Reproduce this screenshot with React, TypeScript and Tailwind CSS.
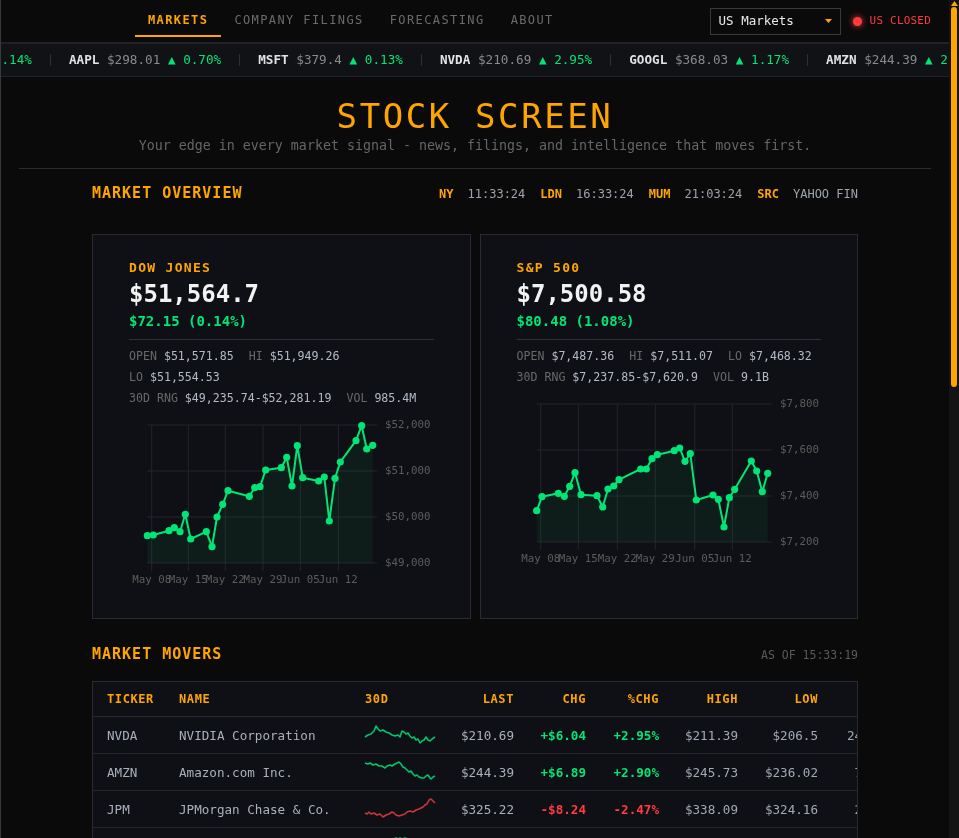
import React from "react";

type Pt = [number, number];

const navItems = ["MARKETS", "COMPANY FILINGS", "FORECASTING", "ABOUT"];

const tickers = [
  { sym: "DOW", price: "$51,564.7", pct: "0.14%", up: true },
  { sym: "AAPL", price: "$298.01", pct: "0.70%", up: true },
  { sym: "MSFT", price: "$379.4", pct: "0.13%", up: true },
  { sym: "NVDA", price: "$210.69", pct: "2.95%", up: true },
  { sym: "GOOGL", price: "$368.03", pct: "1.17%", up: true },
  { sym: "AMZN", price: "$244.39", pct: "2.90%", up: true },
  { sym: "JPM", price: "$325.22", pct: "2.47%", up: false },
];

const clocks: [string, string][] = [
  ["NY", "11:33:24"],
  ["LDN", "16:33:24"],
  ["MUM", "21:03:24"],
  ["SRC", "YAHOO FIN"],
];

const xLabels = ["May 08", "May 15", "May 22", "May 29", "Jun 05", "Jun 12"];

// chart points in svg-local px (plot top = 13, bottom = 151)
const dowPts: Pt[] = [
  [18.3, 123.7], [24.3, 123], [40, 118.7], [45.3, 115.7], [51, 119.7], [56.3, 102.3],
  [61.7, 127], [77.3, 119.7], [83, 134.7], [88, 105], [93.7, 92.3], [99, 78.7],
  [120.3, 84.3], [125.7, 75.7], [131, 74.7], [136.7, 58], [152.3, 55.7], [157.7, 45.3],
  [163, 74], [168.3, 33.7], [173.7, 65.7], [189.7, 69], [195.3, 65], [200.3, 109],
  [206, 66.3], [211.3, 50], [227, 28.7], [232.7, 13.7], [237.7, 37], [243.7, 33.3],
];

const spxPts: Pt[] = [
  [19.7, 119.7], [25, 105.7], [41.3, 102.3], [47.3, 105.3], [52.7, 95.3], [58, 81.7],
  [64, 103.7], [80, 104.7], [85.7, 116], [91, 98], [96.7, 95], [102, 88.7],
  [123.7, 78], [129.3, 78], [135, 67.7], [140.3, 63.7], [157.3, 59.7], [162.7, 57],
  [168, 70.3], [173.3, 62.7], [179.3, 109], [196, 104], [201.3, 108.3], [207, 136],
  [212.3, 106.7], [217.7, 98.3], [234.3, 70], [239.7, 80], [245.3, 100.7], [250.7, 82.3],
];

const movers = [
  { t: "NVDA", name: "NVIDIA Corporation", last: "$210.69", chg: "+$6.04", pct: "+2.95%", high: "$211.39", low: "$206.5", vol: "241.36M", cap: "$5.13T", up: true,
    spark: "0,12 3,10 6,9 9,6 11,1 13,4 15,6 18,5 21,7 24,8 27,10 30,11 33,10 35,12 37,6 39,7 41,9 43,8 45,11 47,13 49,12 51,15 53,14 55,18 57,16 59,15 61,12 63,15 65,16 67,14 70,12" },
  { t: "AMZN", name: "Amazon.com Inc.", last: "$244.39", chg: "+$6.89", pct: "+2.90%", high: "$245.73", low: "$236.02", vol: "73.58M", cap: "$2.61T", up: true,
    spark: "0,1 3,2 5,1 8,3 11,2 14,4 17,4 20,6 22,4 25,3 27,4 30,2 32,1 34,0 36,2 38,5 40,6 42,8 44,10 46,9 48,12 50,14 52,13 54,15 57,16 59,16 61,14 63,13 65,16 66,17 68,15 70,14" },
  { t: "JPM", name: "JPMorgan Chase & Co.", last: "$325.22", chg: "-$8.24", pct: "-2.47%", high: "$338.09", low: "$324.16", vol: "22.47M", cap: "$894.1B", up: false,
    spark: "0,14 2,15 4,13 6,15 9,14 12,16 15,15 18,18 21,16 24,15 27,13 29,14 31,16 34,17 37,16 40,15 42,13 45,12 48,13 51,11 54,10 56,9 58,8 60,6 62,5 64,1 66,0 68,2 70,4" },
  { t: "TSLA", name: "Tesla, Inc.", last: "$438.12", chg: "+$9.87", pct: "+2.30%", high: "$441.80", low: "$426.33", vol: "96.12M", cap: "$1.41T", up: true,
    spark: "0,12 3,11 6,13 9,10 12,11 15,8 18,9 21,6 24,7 27,4 29,3 31,2 33,3 35,2 37,3 40,2 43,3 45,3 47,4 50,5 53,4 56,7 59,6 62,9 65,8 68,7 70,8" },
  { t: "META", name: "Meta Platforms, Inc.", last: "$712.48", chg: "+$11.02", pct: "+1.57%", high: "$715.90", low: "$698.14", vol: "14.83M", cap: "$1.79T", up: true,
    spark: "0,16 4,15 8,14 12,15 16,12 20,13 24,10 28,11 32,9 36,10 40,7 44,8 48,6 52,7 56,4 60,5 64,3 70,2" },
  { t: "XOM", name: "Exxon Mobil Corporation", last: "$118.36", chg: "-$2.11", pct: "-1.75%", high: "$120.84", low: "$117.92", vol: "18.09M", cap: "$502.7B", up: false,
    spark: "0,4 4,5 8,3 12,6 16,5 20,8 24,7 28,9 32,8 36,11 40,10 44,12 48,11 52,14 56,13 60,16 64,15 70,17" },
  { t: "AAPL", name: "Apple Inc.", last: "$298.01", chg: "+$2.07", pct: "+0.70%", high: "$299.44", low: "$294.85", vol: "51.27M", cap: "$4.42T", up: true,
    spark: "0,13 4,12 8,14 12,11 16,12 20,9 24,10 28,8 32,11 36,9 40,7 44,8 48,6 52,8 56,5 60,6 64,4 70,5" },
  { t: "GOOGL", name: "Alphabet Inc.", last: "$368.03", chg: "+$4.26", pct: "+1.17%", high: "$369.51", low: "$362.40", vol: "28.65M", cap: "$4.46T", up: true,
    spark: "0,15 4,14 8,15 12,12 16,13 20,10 24,11 28,9 32,10 36,7 40,8 44,6 48,7 52,4 56,5 60,3 64,4 70,2" },
  { t: "JNJ", name: "Johnson & Johnson", last: "$162.74", chg: "-$1.48", pct: "-0.90%", high: "$164.55", low: "$162.10", vol: "7.92M", cap: "$391.8B", up: false,
    spark: "0,6 4,5 8,7 12,6 16,8 20,7 24,9 28,8 32,10 36,12 40,11 44,13 48,12 52,14 56,13 60,15 64,14 70,16" },
  { t: "MSFT", name: "Microsoft Corporation", last: "$379.4", chg: "+$0.49", pct: "+0.13%", high: "$381.02", low: "$376.88", vol: "19.44M", cap: "$2.82T", up: true,
    spark: "0,10 4,11 8,9 12,10 16,8 20,11 24,9 28,10 32,8 36,9 40,7 44,10 48,8 52,9 56,7 60,8 64,9 70,8" },
];

const news = [
  { src: "REUTERS", time: "15:21", title: "Chipmakers extend rally as AI spending forecasts climb again" },
  { src: "BLOOMBERG", time: "15:02", title: "Treasury yields slip ahead of Fed minutes; dollar steady" },
  { src: "SEC 8-K", time: "14:47", title: "JPMorgan Chase files update on consumer credit reserves" },
  { src: "WSJ", time: "14:30", title: "Amazon expands same-day delivery network to 40 new metros" },
  { src: "CNBC", time: "14:12", title: "Oil retreats as inventories build for third straight week" },
  { src: "SEC 10-Q", time: "13:55", title: "Tesla quarterly filing shows higher energy storage margins" },
  { src: "FT", time: "13:40", title: "European stocks close mixed; FTSE 100 edges higher" },
  { src: "REUTERS", time: "13:18", title: "Nikkei futures point higher after yen weakens overnight" },
];

function IndexChart({ pts, right, xTicks, yLabels }: { pts: Pt[]; right: number; xTicks: number[]; yLabels: string[] }) {
  const yGrid = [13, 59, 105, 151];
  const left = pts[0][0];
  const line = pts.map((p) => p.join(",")).join(" ");
  const area =
    `M${left},151 ` + pts.map(([x, y]) => `L${x},${y}`).join(" ") + ` L${pts[pts.length - 1][0]},151 Z`;
  return (
    <svg width="304" height="180" viewBox="0 0 304 180" className="mt-[3px] block overflow-visible">
      {yGrid.map((y) => (
        <line key={y} x1={left} x2={right + 5} y1={y} y2={y} stroke="#22252b" />
      ))}
      {xTicks.map((x) => (
        <line key={x} x1={x} x2={x} y1={13} y2={159} stroke="#22252b" />
      ))}
      <path d={area} fill="#00e676" fillOpacity={0.06} />
      <polyline points={line} fill="none" stroke="#00e676" strokeWidth={2} strokeLinejoin="round" />
      {pts.map(([x, y], i) => (
        <circle key={i} cx={x} cy={y} r={3.6} fill="#00e676" />
      ))}
      {yLabels.map((l, i) => (
        <text key={l} x={right + 13} y={yGrid[i]} dominantBaseline="middle" fontSize="10.8" fill="#5c5c5c">
          {l}
        </text>
      ))}
      {xTicks.map((x, i) => (
        <text key={x} x={x} y={168} textAnchor="middle" dominantBaseline="middle" fontSize="10.8" fill="#5c5c5c">
          {xLabels[i]}
        </text>
      ))}
    </svg>
  );
}

function IndexCard(props: {
  name: string;
  price: string;
  change: string;
  stats: [string, string][];
  pts: Pt[];
  right: number;
  xTicks: number[];
  yLabels: string[];
}) {
  return (
    <div className="border border-[#2a2b31] bg-[#0f1015] px-[36px] pb-[26px] pt-[23px]">
      <div className="text-[13px] font-bold leading-[20px] tracking-[1.3px] text-[#ffa500]">{props.name}</div>
      <div className="mt-[2px] text-[24px] font-bold leading-[28px] text-[#f2f2f2]">{props.price}</div>
      <div className="mt-[3px] text-[14px] font-bold leading-[20px] text-[#00e676]">{props.change}</div>
      <div className="mt-[8px] h-px bg-[#303136]" />
      <div className="mt-[6px] flex flex-wrap gap-x-[15px] text-[11.6px] leading-[21px]">
        {props.stats.map(([k, v]) => (
          <span key={k} className="whitespace-nowrap">
            <span className="text-[#686868]">{k}</span> <span className="text-[#b3bac6]">{v}</span>
          </span>
        ))}
      </div>
      <IndexChart pts={props.pts} right={props.right} xTicks={props.xTicks} yLabels={props.yLabels} />
    </div>
  );
}

function SectionTitle({ children }: { children: React.ReactNode }) {
  return <h2 className="text-[15px] font-bold leading-[20px] tracking-[1px] text-[#ffa500]">{children}</h2>;
}

// thin orange scroll rail drawn next to the scrolling page
function ScrollRail() {
  return (
    <div className="flex w-[10px] shrink-0 flex-col items-center bg-[#141414]">
      <svg width="7" height="5" viewBox="0 0 7 5" className="mt-px">
        <path d="M0 5L3.5 0 7 5z" fill="#ffa500" />
      </svg>
      <div className="mt-px h-[380px] w-[6px] rounded-full bg-[#ffa500]" />
    </div>
  );
}

export default function App() {
  return (
    <div className="flex h-screen border-l border-[#3a3a3a] bg-[#0a0a0a] font-['DejaVu_Sans_Mono',monospace] text-[#b3bac6]">
      <div className="min-w-0 flex-1 overflow-y-auto [scrollbar-width:none]">
        {/* top nav */}
        <header className="flex h-[44px] items-center border-b-2 border-[#202228] pr-[18px]">
          <nav className="ml-[134px] flex self-start">
            {navItems.map((item, i) => (
              <a
                key={item}
                href="#"
                className={
                  i === 0
                    ? "flex h-[37px] items-center border-b-2 border-[#ffa500] px-[13px] pt-[5px] text-[12px] font-bold tracking-[1.4px] text-[#ffa500]"
                    : "flex h-[37px] items-center border-b-2 border-transparent px-[13px] pt-[5px] text-[12px] tracking-[1.4px] text-[#6b6b6b]"
                }
              >
                {item}
              </a>
            ))}
          </nav>
          <div className="ml-auto flex items-center">
            <button className="flex h-[27px] w-[131px] items-center justify-between border border-[#3a3a3a] bg-[#0a0a0a] px-[8px] text-[12.5px] text-[#e8e8e8]">
              US Markets
              <svg width="7" height="4" viewBox="0 0 7 4">
                <path d="M0 0h7L3.5 4z" fill="#ffa500" />
              </svg>
            </button>
            <div className="ml-[12px] flex items-center gap-[8px]">
              <span className="h-[9px] w-[9px] rounded-full bg-[#ff3b3b] shadow-[0_0_6px_#ff3b3b]" />
              <span className="text-[11px] tracking-[0.2px] text-[#ff3b3b]">US CLOSED</span>
            </div>
          </div>
        </header>

        {/* ticker tape */}
        <div className="flex h-[33px] items-center overflow-hidden whitespace-nowrap border-b border-[#202228] bg-[#111216] text-[12.65px]">
          <div className="-ml-[129px] flex shrink-0 items-center">
            {tickers.map((t, i) => (
              <React.Fragment key={t.sym}>
                {i > 0 && <span className="mx-[18px] h-[12px] w-px bg-[#2e2f35]" />}
                <span>
                  <span className="font-bold text-[#e2e2e2]">{t.sym}</span>{" "}
                  <span className="text-[#8a8a8a]">{t.price}</span>{" "}
                  <span className={t.up ? "text-[#00e676]" : "text-[#ff3b3b]"}>
                    {t.up ? "▲" : "▼"} {t.pct}
                  </span>
                </span>
              </React.Fragment>
            ))}
          </div>
        </div>

        <main className="px-[18px] pb-[60px] pt-[22px]">
          <h1 className="text-center text-[34px] leading-none tracking-[2.6px] text-[#ffa500]">STOCK SCREEN</h1>
          <p className="mt-[3px] text-center text-[13.3px] leading-[20px] text-[#666]">
            Your edge in every market signal - news, filings, and intelligence that moves first.
          </p>
          <div className="mt-[12px] h-px bg-[#2c2c30]" />

          {/* market overview */}
          <div className="mx-auto mt-[14px] flex max-w-[766px] items-baseline justify-between">
            <SectionTitle>MARKET OVERVIEW</SectionTitle>
            <div className="flex gap-[15px] text-[12px]">
              {clocks.map(([k, v]) => (
                <span key={k} className="whitespace-nowrap">
                  <span className="font-bold text-[#ffa500]">{k}</span>
                  <span className="ml-[14px] text-[#9da3ad]">{v}</span>
                </span>
              ))}
            </div>
          </div>

          <div className="mx-auto mt-[31px] grid max-w-[766px] grid-cols-2 gap-[9px]">
            <IndexCard
              name="DOW JONES"
              price="$51,564.7"
              change="$72.15 (0.14%)"
              stats={[
                ["OPEN", "$51,571.85"],
                ["HI", "$51,949.26"],
                ["LO", "$51,554.53"],
                ["30D RNG", "$49,235.74-$52,281.19"],
                ["VOL", "985.4M"],
              ]}
              pts={dowPts}
              right={243}
              xTicks={[22.7, 59.3, 96.3, 134, 171.3, 209.3]}
              yLabels={["$52,000", "$51,000", "$50,000", "$49,000"]}
            />
            <IndexCard
              name="S&P 500"
              price="$7,500.58"
              change="$80.48 (1.08%)"
              stats={[
                ["OPEN", "$7,487.36"],
                ["HI", "$7,511.07"],
                ["LO", "$7,468.32"],
                ["30D RNG", "$7,237.85-$7,620.9"],
                ["VOL", "9.1B"],
              ]}
              pts={spxPts}
              right={250}
              xTicks={[23.7, 61.3, 100.3, 138.3, 177.7, 215.3]}
              yLabels={["$7,800", "$7,600", "$7,400", "$7,200"]}
            />
          </div>

          {/* market movers */}
          <div className="mx-auto mt-[25px] flex max-w-[766px] items-baseline justify-between">
            <SectionTitle>MARKET MOVERS</SectionTitle>
            <span className="text-[11.5px] text-[#5a5a5a]">AS OF 15:33:19</span>
          </div>
          <div className="mx-auto mt-[17px] max-w-[766px] overflow-x-auto border border-[#2a2b31] bg-[#0f1015] [scrollbar-width:none]">
            <table className="w-[911px] table-fixed border-collapse">
              <colgroup>
                <col className="w-[72px]" />
                <col className="w-[186px]" />
                <col className="w-[98px]" />
                <col className="w-[79px]" />
                <col className="w-[72px]" />
                <col className="w-[73px]" />
                <col className="w-[79px]" />
                <col className="w-[80px]" />
                <col className="w-[82px]" />
                <col className="w-[90px]" />
              </colgroup>
              <thead>
                <tr className="border-b border-[#2a2b31] text-[12px] font-bold leading-[18px] tracking-[0.6px] text-[#ffa500]">
                  <th className="py-[8px] pl-[14px] text-left">TICKER</th>
                  <th className="py-[8px] pl-[14px] text-left">NAME</th>
                  <th className="py-[8px] pl-[14px] text-left">30D</th>
                  <th className="py-[8px] pr-[14px] text-right">LAST</th>
                  <th className="py-[8px] pr-[14px] text-right">CHG</th>
                  <th className="py-[8px] pr-[14px] text-right">%CHG</th>
                  <th className="py-[8px] pr-[14px] text-right">HIGH</th>
                  <th className="py-[8px] pr-[14px] text-right">LOW</th>
                  <th className="py-[8px] pr-[14px] text-right">VOL</th>
                  <th className="py-[8px] pr-[14px] text-right">MKT CAP</th>
                </tr>
              </thead>
              <tbody className="text-[12.6px] leading-[19px]">
                {movers.map((m) => (
                  <tr key={m.t} className="border-b border-[#24252b]">
                    <td className="py-[8px] pl-[14px] text-[#a9b0bc]">{m.t}</td>
                    <td className="truncate py-[8px] pl-[14px] text-[#a9b0bc]">{m.name}</td>
                    <td className="py-[8px] pl-[14px]">
                      <svg width="70" height="20" viewBox="0 0 70 20" className="block overflow-visible">
                        <polyline
                          points={m.spark}
                          fill="none"
                          stroke={m.up ? "#00c46a" : "#c8363b"}
                          strokeWidth={1.6}
                          strokeLinejoin="round"
                        />
                      </svg>
                    </td>
                    <td className="py-[8px] pr-[14px] text-right text-[#a9b0bc]">{m.last}</td>
                    <td className={m.up ? "py-[8px] pr-[14px] text-right font-bold text-[#00e676]" : "py-[8px] pr-[14px] text-right font-bold text-[#ff3d3d]"}>{m.chg}</td>
                    <td className={m.up ? "py-[8px] pr-[14px] text-right font-bold text-[#00e676]" : "py-[8px] pr-[14px] text-right font-bold text-[#ff3d3d]"}>{m.pct}</td>
                    <td className="py-[8px] pr-[14px] text-right text-[#a1a9b6]">{m.high}</td>
                    <td className="py-[8px] pr-[14px] text-right text-[#a1a9b6]">{m.low}</td>
                    <td className="py-[8px] pr-[14px] text-right text-[#a1a9b6]">{m.vol}</td>
                    <td className="py-[8px] pr-[14px] text-right text-[#a1a9b6]">{m.cap}</td>
                  </tr>
                ))}
              </tbody>
            </table>
          </div>

          {/* headlines */}
          <div className="mx-auto mt-[25px] flex max-w-[766px] items-baseline justify-between">
            <SectionTitle>LATEST HEADLINES</SectionTitle>
            <span className="text-[11.5px] text-[#5a5a5a]">8 ITEMS</span>
          </div>
          <ul className="mx-auto mt-[17px] max-w-[766px] border border-[#2a2b31] bg-[#0f1015]">
            {news.map((n) => (
              <li key={n.title} className="border-b border-[#24252b] px-[14px] py-[12px] last:border-b-0">
                <div className="text-[11px] leading-[16px] text-[#666]">
                  <span className="font-bold text-[#ffa500]">{n.src}</span> · {n.time}
                </div>
                <div className="mt-[4px] text-[13px] leading-[19px] text-[#c6cbd4]">{n.title}</div>
              </li>
            ))}
          </ul>

          <footer className="mx-auto mt-[40px] flex max-w-[766px] justify-between border-t border-[#2c2c30] pt-[20px] text-[11px] text-[#555]">
            <span>STOCK SCREEN · DATA DELAYED 15 MIN</span>
            <span>© 2025</span>
          </footer>
        </main>
      </div>
      <ScrollRail />
    </div>
  );
}
